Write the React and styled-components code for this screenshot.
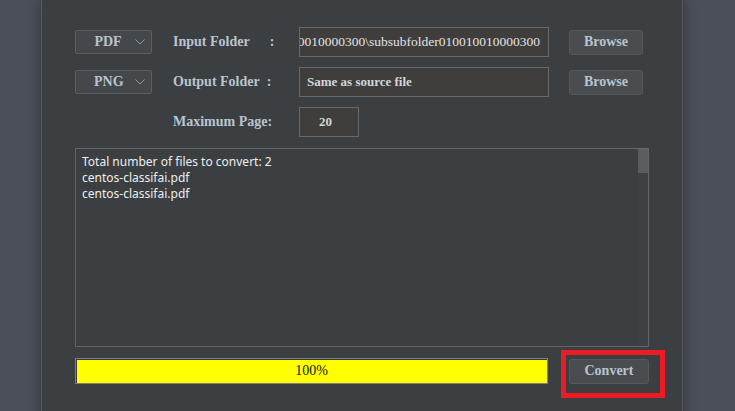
import React from "react";
import styled, { createGlobalStyle } from "styled-components";

const Global = createGlobalStyle`
  html, body {
    margin: 0;
    padding: 0;
    background: #4a4f58;
    overflow: hidden;
  }
`;

const Page = styled.div`
  display: flex;
  width: 735px;
  height: 411px;
  background: #4a4f58;
`;

const Side = styled.div`
  width: ${(p) => p.w}px;
  flex: none;
`;

const Panel = styled.div`
  width: 642px;
  height: 430px;
  flex: none;
  box-sizing: border-box;
  background: #3c3f41;
  border-left: 1px solid #54585c;
  border-right: 1px solid #54585c;
  box-shadow: 0 0 12px rgba(0, 0, 0, 0.35);
  padding: 27px 0 0 33px;
  display: flex;
  flex-direction: column;
  gap: 10px;
  font-family: "Liberation Serif", serif;
`;

const Row = styled.div`
  display: flex;
  align-items: center;
  height: 30px;
`;

const Select = styled.div`
  width: 77px;
  height: 24px;
  box-sizing: border-box;
  border: 1px solid #5b5e61;
  border-radius: 2px;
  background: #45484a;
  display: flex;
  align-items: center;
  padding-left: 18px;
  gap: 13px;
  margin-right: 21px;
  color: #b9c4cf;
  font-weight: bold;
  font-size: 14px;
  visibility: ${(p) => (p.hidden ? "hidden" : "visible")};
`;

const SelectText = styled.span`
  width: 28px;
  text-align: center;
`;

const Label = styled.div`
  width: 126px;
  display: flex;
  color: #b9c4cf;
  font-weight: bold;
  font-size: 14px;
  white-space: nowrap;
`;

const Colon = styled.span`
  margin-left: ${(p) => p.gap}px;
`;

const Field = styled.div`
  width: ${(p) => p.w}px;
  height: 30px;
  box-sizing: border-box;
  border: 1px solid #6a6a6a;
  background: #3f3e3d;
  display: flex;
  align-items: center;
  justify-content: ${(p) => (p.end ? "flex-end" : "flex-start")};
  padding: 0 8px 0 ${(p) => p.pl || 7}px;
  overflow: hidden;
  white-space: nowrap;
  color: ${(p) => (p.thin ? "#e2e3e5" : "#d4d6d8")};
  font-weight: ${(p) => (p.thin ? "normal" : "bold")};
  font-size: ${(p) => (p.thin ? 13.5 : 13)}px;
`;

const Button = styled.div`
  width: ${(p) => p.w || 74}px;
  height: 25px;
  box-sizing: border-box;
  border: 1px solid #56595c;
  border-radius: 3px;
  background: #4a4d50;
  display: flex;
  align-items: center;
  justify-content: center;
  color: #b9c4cf;
  font-weight: bold;
  font-size: 14px;
  margin-left: ${(p) => p.ml || 0}px;
  position: relative;
`;

const Log = styled.div`
  margin-top: 1px;
  width: 574px;
  height: 199px;
  box-sizing: border-box;
  border: 1px solid #646668;
  display: flex;
  justify-content: space-between;
  font-family: "Noto Sans", "Open Sans", sans-serif;
  font-size: 12px;
  line-height: 16px;
  color: #eceef0;
`;

const LogText = styled.div`
  padding: 5px 0 0 6px;
`;

const Track = styled.div`
  width: 10px;
  background: #3e4143;
`;

const Thumb = styled.div`
  height: 24px;
  background: #5b5e61;
`;

const Bottom = styled.div`
  display: flex;
  align-items: center;
  margin-top: 1px;
`;

const Progress = styled.div`
  width: 473px;
  height: 26px;
  box-sizing: border-box;
  border: 1px solid #7c7e80;
  background: #ffff00;
  box-shadow: inset 1px 1px 0 #3a3a3a;
  display: flex;
  align-items: center;
  justify-content: center;
  font-family: "Liberation Serif", serif;
  font-size: 14px;
  color: #111;
`;

const Highlight = styled.div`
  position: absolute;
  left: -9px;
  top: -10px;
  width: 104px;
  height: 48px;
  box-sizing: border-box;
  border: 5px solid #ed1c24;
`;

const Chevron = () => (
  <svg width="10" height="6" viewBox="0 0 10 6">
    <path d="M0.5 0.5 L5 5 L9.5 0.5" fill="none" stroke="#8f969d" strokeWidth="1" />
  </svg>
);

export default function App() {
  return (
    <Page>
      <Global />
      <Side w={41} />
      <Panel>
        <Row>
          <Select>
            <SelectText>PDF</SelectText>
            <Chevron />
          </Select>
          <Label>
            Input Folder<Colon gap={20}>:</Colon>
          </Label>
          <Field w={250} end thin>
            C:\Users\folder\subfolder010010000300\subsubfolder010010010000300
          </Field>
          <Button ml={20}>Browse</Button>
        </Row>
        <Row>
          <Select>
            <SelectText>PNG</SelectText>
            <Chevron />
          </Select>
          <Label>
            Output Folder<Colon gap={7}>:</Colon>
          </Label>
          <Field w={250}>Same as source file</Field>
          <Button ml={20}>Browse</Button>
        </Row>
        <Row>
          <Select hidden />
          <Label>Maximum Page:</Label>
          <Field w={60} pl={19}>20</Field>
        </Row>
        <Log>
          <LogText>
            Total number of files to convert: 2
            <br />
            centos-classifai.pdf
            <br />
            centos-classifai.pdf
          </LogText>
          <Track>
            <Thumb />
          </Track>
        </Log>
        <Bottom>
          <Progress>100%</Progress>
          <Button w={80} ml={21}>
            Convert
            <Highlight />
          </Button>
        </Bottom>
      </Panel>
      <Side w={52} />
    </Page>
  );
}
